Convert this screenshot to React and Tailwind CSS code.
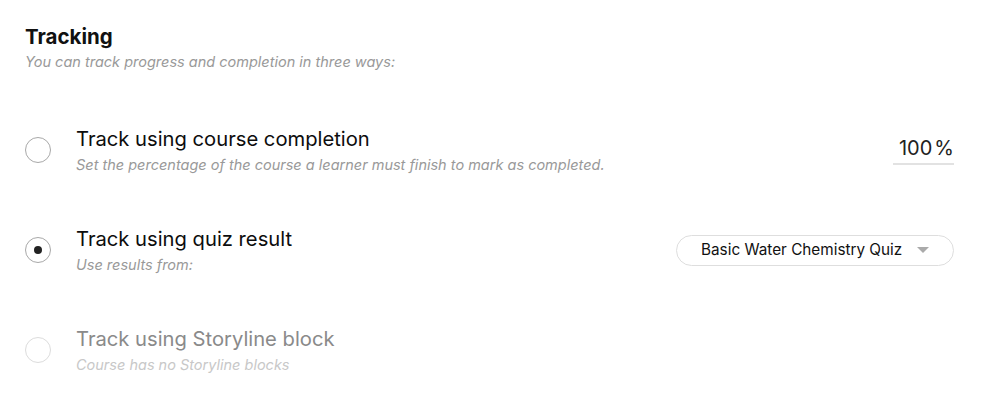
import React, { useState } from 'react';

const options = [
    { id: 'completion', title: 'Track using course completion', sub: 'Set the percentage of the course a learner must finish to mark as completed.' },
    { id: 'quiz', title: 'Track using quiz result', sub: 'Use results from:' },
    { id: 'storyline', title: 'Track using Storyline block', sub: 'Course has no Storyline blocks', disabled: true },
];

const Radio = ({ checked, disabled }) => (
    <span
        className={
            'flex h-[26px] w-[26px] shrink-0 items-center justify-center rounded-full border ' +
            (disabled ? 'border-[#dcdcdc]' : 'border-[#a8a8a8]')
        }
    >
        {checked && <span className="h-[8px] w-[8px] rounded-full bg-[#222]" />}
    </span>
);

const App = () => {
    const [selected, setSelected] = useState('quiz');

    return (
        <div className="min-h-[408px] bg-white pl-[25px] pr-[44px] pt-[24px] font-['Inter',sans-serif]">
            <h2 className="text-[20.5px] font-bold leading-[26px] text-[#111]">Tracking</h2>
            <p className="mt-[2px] text-[14.5px] italic leading-[20px] text-[#999]">
                You can track progress and completion in three ways:
            </p>

            <div className="mt-[28px]">
                {options.map(opt => (
                    <div
                        key={opt.id}
                        className="flex h-[100px] items-center"
                        onClick={() => !opt.disabled && setSelected(opt.id)}
                    >
                        <Radio checked={selected === opt.id} disabled={opt.disabled} />
                        <div className="ml-[25px] flex flex-col">
                            <span className={'text-[20.2px] leading-[25px] ' + (opt.disabled ? 'text-[#8a8a8a]' : 'text-[#0d0d0d]')}>
                                {opt.title}
                            </span>
                            <span className={'mt-[4px] text-[14.5px] italic leading-[20px] ' + (opt.disabled ? 'text-[#c8c8c8]' : 'text-[#999]')}>
                                {opt.sub}
                            </span>
                        </div>

                        {opt.id === 'completion' && (
                            <div className="ml-auto flex w-[61px] items-end justify-end border-b-2 border-[#e2e2e2] pb-[2px] text-[20px] leading-[26px] text-[#222]">
                                <span>100</span>
                                <span className="ml-[2px]">%</span>
                            </div>
                        )}

                        {opt.id === 'quiz' && (
                            <div className="ml-auto flex h-[31px] w-[278px] items-center rounded-full border border-[#dedede] pl-[24px] pr-[24px] text-[15.3px] text-[#111]">
                                <span>Basic Water Chemistry Quiz</span>
                                <svg className="ml-auto" width="12" height="6" viewBox="0 0 12 6">
                                    <path d="M0 0 L12 0 L6 6 Z" fill="#aaa" />
                                </svg>
                            </div>
                        )}
                    </div>
                ))}
            </div>
        </div>
    );
};

export default App;
